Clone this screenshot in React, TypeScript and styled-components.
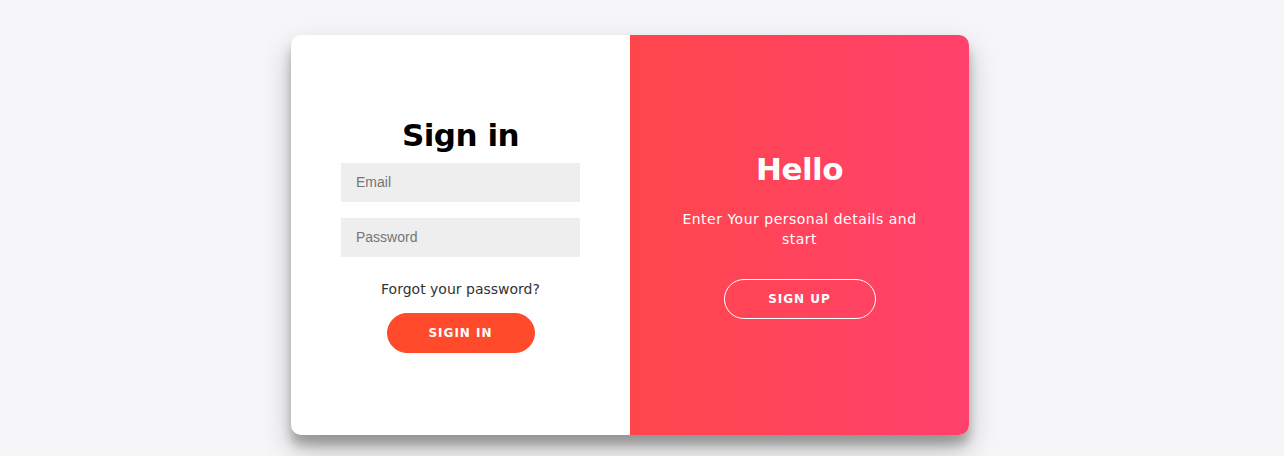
import * as React from "react";
import styled, { createGlobalStyle } from "styled-components";

const GlobalStyle = createGlobalStyle`
  html, body {
    margin: 0;
    padding: 0;
    background: #f6f5f7;
    font-family: "DejaVu Sans", sans-serif;
  }
`;

const Page = styled.div`
  display: flex;
  padding: 35px 0 0 291px;
  height: 456px;
  box-sizing: border-box;
`;

const Card = styled.div`
  display: grid;
  grid-template-columns: 339px 339px;
  width: 678px;
  height: 400px;
  border-radius: 10px;
  overflow: hidden;
  background: #fff;
  box-shadow: 0 14px 28px rgba(0, 0, 0, 0.25), 0 10px 10px rgba(0, 0, 0, 0.22);
`;

const Form = styled.form`
  display: flex;
  flex-direction: column;
  align-items: center;
  justify-content: center;
  padding: 0 50px 2px;
  text-align: center;
`;

const Overlay = styled.div`
  display: flex;
  flex-direction: column;
  align-items: center;
  justify-content: center;
  padding: 0 40px 2px;
  text-align: center;
  color: #fff;
  background: linear-gradient(to right, #ff464c, #ff416c);
`;

const Title = styled.h1`
  margin: 0;
  font-size: 31px;
  line-height: 39px;
  font-weight: bold;
  letter-spacing: -0.5px;
  color: ${(p) => (p.color ? p.color : "#000")};
`;

const Input = styled.input`
  width: 100%;
  box-sizing: border-box;
  height: 39px;
  margin: 8px 0;
  padding: 12px 15px;
  border: none;
  outline: none;
  background: #eee;
  font-family: "Liberation Sans", Arial, sans-serif;
  font-size: 14px;

  &::placeholder {
    color: #757575;
  }
`;

const Link = styled.a`
  margin: 16px 0 15px;
  font-size: 14px;
  line-height: 17px;
  color: #333;
  text-decoration: none;
`;

const Text = styled.p`
  margin: 20px 0 30px;
  font-size: 14px;
  line-height: 20px;
  letter-spacing: 0.5px;
  font-weight: normal;
`;

const Button = styled.button<{ $ghost?: boolean }>`
  width: ${(p) => (p.$ghost ? "152px" : "148px")};
  height: 40px;
  padding: 0;
  border-radius: 20px;
  border: 1px solid ${(p) => (p.$ghost ? "#fff" : "#ff4b2b")};
  background: ${(p) => (p.$ghost ? "transparent" : "#ff4b2b")};
  color: #fff;
  font-family: "DejaVu Sans", sans-serif;
  font-size: 12px;
  font-weight: bold;
  letter-spacing: 1px;
  text-transform: uppercase;
  cursor: pointer;
`;

export default function App() {
  return (
    <>
      <GlobalStyle />
      <Page>
        <Card>
          <Form onSubmit={(e) => e.preventDefault()}>
            <Title>Sign in</Title>
            <Input type="email" placeholder="Email" />
            <Input type="password" placeholder="Password" />
            <Link href="#">Forgot your password?</Link>
            <Button type="submit">Sigin In</Button>
          </Form>
          <Overlay>
            <Title color="#fff">Hello</Title>
            <Text>Enter Your personal details and start</Text>
            <Button $ghost type="button">Sign Up</Button>
          </Overlay>
        </Card>
      </Page>
    </>
  );
}
